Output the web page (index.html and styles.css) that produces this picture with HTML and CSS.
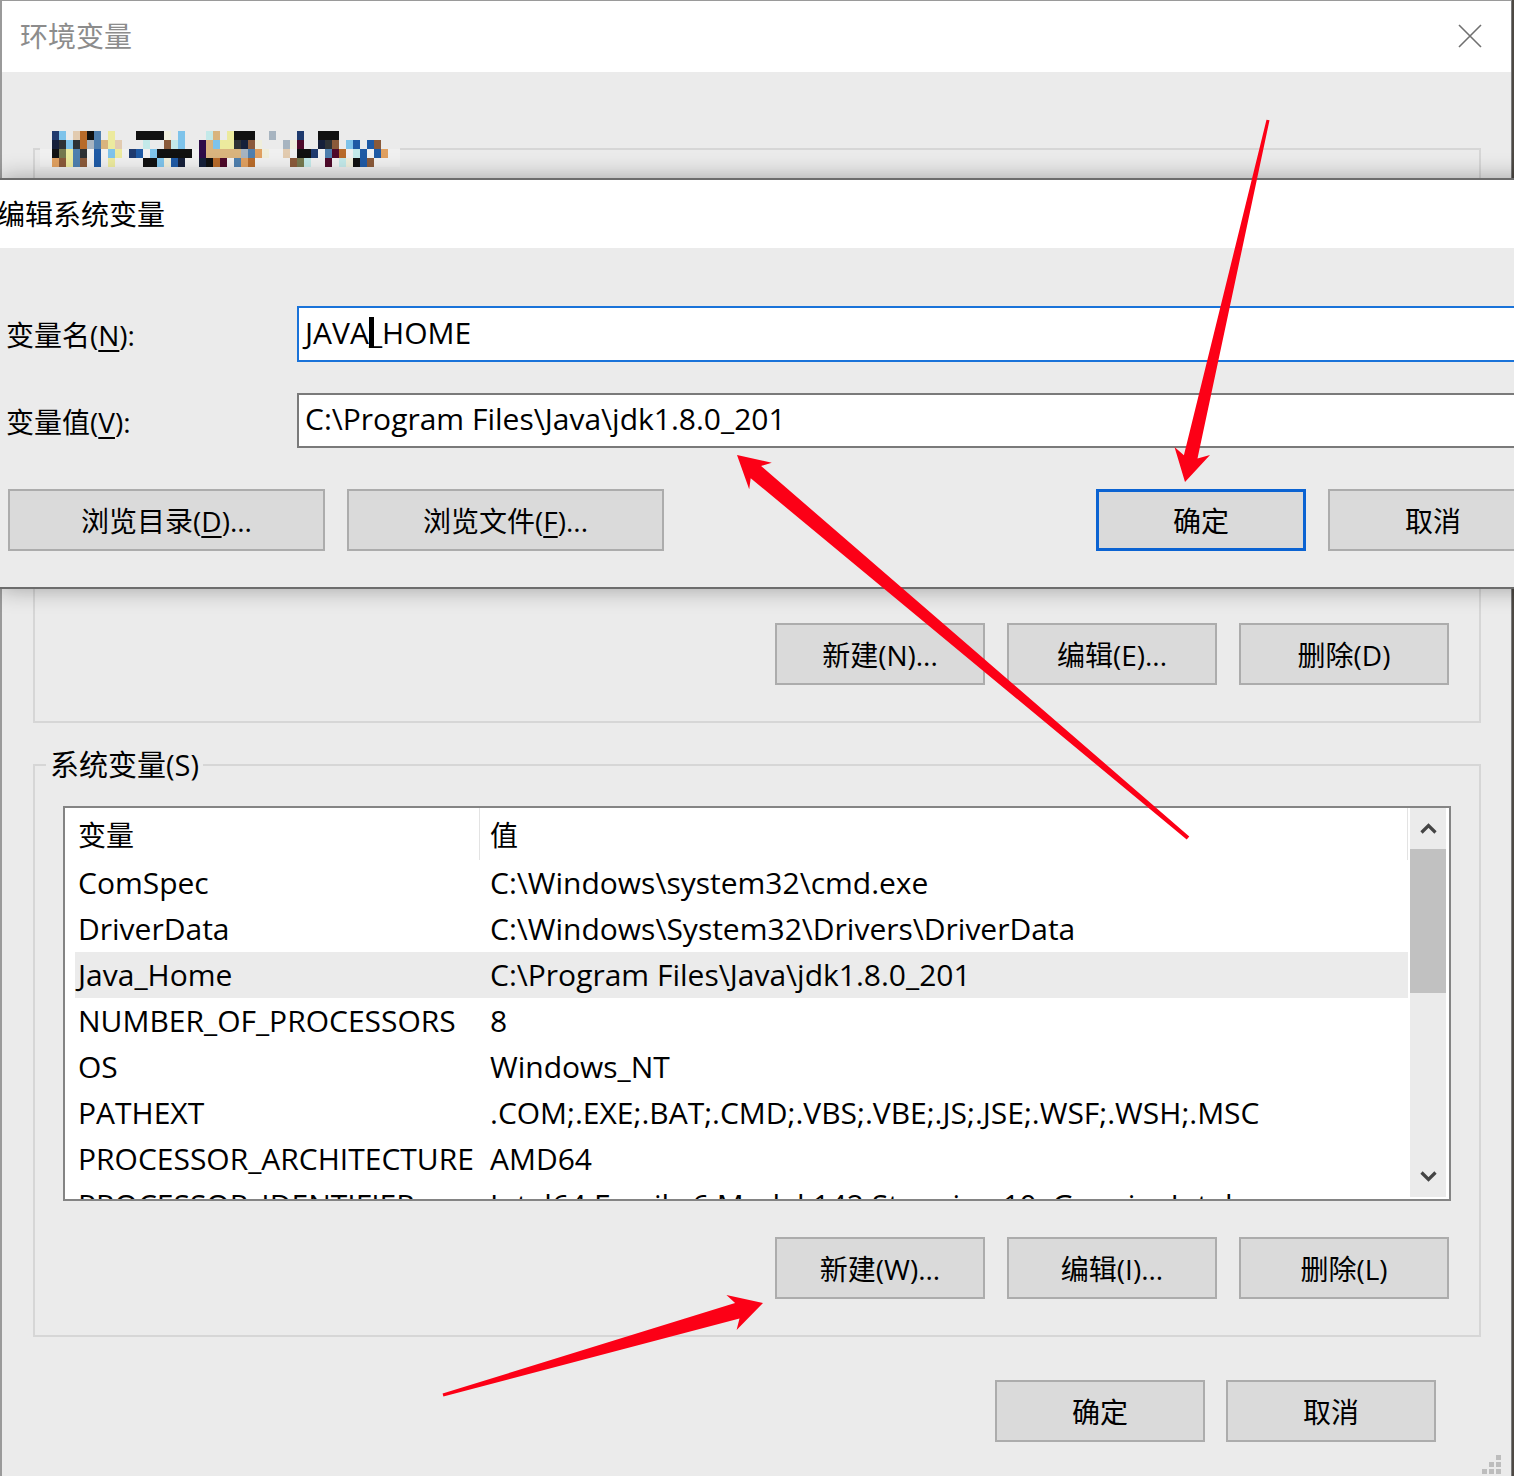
FILE: index.html
```html
<!DOCTYPE html>
<html lang="zh-CN">
<head>
  <meta charset="UTF-8">
  <meta name="viewport" content="width=device-width, initial-scale=1.0">
  <title>环境变量</title>
  <link rel="stylesheet" href="styles.css">
</head>
<body>
  <!-- Back window: 环境变量 -->
  <div class="env-window">
    <div class="title-bar">
      <span class="title">环境变量</span>
      <svg class="close-icon" width="24" height="24" viewBox="0 0 24 24">
        <path d="M1 1 L23 23 M23 1 L1 23" stroke="#707070" stroke-width="1.6" fill="none"/>
      </svg>
    </div>

    <div class="env-body">
      <fieldset class="group user-group">
        <legend class="legend-blur"><svg id="mosaic" width="360" height="36"></svg></legend>
        <div class="group-inner">
          <div class="var-list"></div>
          <div class="btn-row">
            <button class="btn">新建(N)...</button>
            <button class="btn">编辑(E)...</button>
            <button class="btn">删除(D)</button>
          </div>
        </div>
      </fieldset>

      <fieldset class="group">
        <legend>系统变量(S)</legend>
        <div class="group-inner">
          <div class="var-list">
            <div class="list-body">
              <div class="list-head">
                <span class="col-name">变量</span>
                <span class="col-value">值</span>
              </div>
              <div class="list-row"><span class="col-name">ComSpec</span><span class="col-value">C:\Windows\system32\cmd.exe</span></div>
              <div class="list-row"><span class="col-name">DriverData</span><span class="col-value">C:\Windows\System32\Drivers\DriverData</span></div>
              <div class="list-row selected"><span class="col-name">Java_Home</span><span class="col-value">C:\Program Files\Java\jdk1.8.0_201</span></div>
              <div class="list-row"><span class="col-name">NUMBER_OF_PROCESSORS</span><span class="col-value">8</span></div>
              <div class="list-row"><span class="col-name">OS</span><span class="col-value">Windows_NT</span></div>
              <div class="list-row"><span class="col-name">PATHEXT</span><span class="col-value">.COM;.EXE;.BAT;.CMD;.VBS;.VBE;.JS;.JSE;.WSF;.WSH;.MSC</span></div>
              <div class="list-row"><span class="col-name">PROCESSOR_ARCHITECTURE</span><span class="col-value">AMD64</span></div>
              <div class="list-row"><span class="col-name">PROCESSOR_IDENTIFIER</span><span class="col-value">Intel64 Family 6 Model 142 Stepping 10, GenuineIntel</span></div>
            </div>
            <div class="scrollbar">
              <div class="track">
                <div class="scroll-btn">
                  <svg width="17" height="11" viewBox="0 0 17 11"><polyline points="1.5,9.5 8.5,2.5 15.5,9.5" fill="none" stroke="#444" stroke-width="3.2"/></svg>
                </div>
                <div class="thumb"></div>
                <div class="track-fill"></div>
                <div class="scroll-btn">
                  <svg width="17" height="11" viewBox="0 0 17 11"><polyline points="1.5,1.5 8.5,8.5 15.5,1.5" fill="none" stroke="#444" stroke-width="3.2"/></svg>
                </div>
              </div>
            </div>
          </div>
          <div class="btn-row">
            <button class="btn">新建(W)...</button>
            <button class="btn">编辑(I)...</button>
            <button class="btn">删除(L)</button>
          </div>
        </div>
      </fieldset>

      <div class="dialog-actions">
        <button class="btn">确定</button>
        <button class="btn">取消</button>
      </div>
    </div>

    <svg class="grip" width="24" height="22" viewBox="0 0 24 22">
      <rect x="15" y="3" width="5" height="5" fill="#bdbdbd"/>
      <rect x="8" y="10" width="5" height="5" fill="#bdbdbd"/>
      <rect x="15" y="10" width="5" height="5" fill="#bdbdbd"/>
      <rect x="1" y="17" width="5" height="5" fill="#bdbdbd"/>
      <rect x="8" y="17" width="5" height="5" fill="#bdbdbd"/>
      <rect x="15" y="17" width="5" height="5" fill="#bdbdbd"/>
    </svg>
  </div>

  <!-- Front window: 编辑系统变量 -->
  <div class="edit-dialog">
    <div class="edit-title">编辑系统变量</div>
    <div class="edit-body">
      <div class="field-row">
        <label class="field-label">变量名(<u>N</u>):</label>
        <div class="text-input focused">JAVA<span class="caret"></span>_HOME</div>
      </div>
      <div class="field-row second">
        <label class="field-label">变量值(<u>V</u>):</label>
        <div class="text-input">C:\Program Files\Java\jdk1.8.0_201</div>
      </div>
      <div class="edit-actions">
        <button class="btn btn-wide">浏览目录(<u>D</u>)...</button>
        <button class="btn btn-wide">浏览文件(<u>F</u>)...</button>
        <button class="btn btn-primary">确定</button>
        <button class="btn">取消</button>
      </div>
    </div>
  </div>

  <!-- Red annotation arrows -->
  <svg class="arrows" width="1514" height="1476" viewBox="0 0 1514 1476">
    <polygon points="1269.5,120.3 1197.5,458.5 1210,455 1185,482 1174.5,447 1183.9,455.3 1266.5,119.7"/>
    <polygon points="1189.3,836.5 761.1,466 771.8,462.7 737,455 749.2,489.3 750.7,478.2 1186.7,839.5"/>
    <polygon points="442.6,1393.6 735.1,1303.1 726.4,1294.9 763,1303 736.6,1330.1 739.5,1318.5 443.4,1396.4"/>
  </svg>

  <script>
    // Blurred legend of the user-variable group (pixel mosaic)
    const palette = {
      a: '#1f3a6e', b: '#7ec3ea', c: '#e2cbb0', d: '#b86b2a', k: '#111111',
      s: '#4f7fae', y: '#ecea9e', w: '#efeedc', t: '#d9b47e', g: '#2e3235',
      h: '#a7b4c0', p: '#2e0c48', m: '#4e0a2a', B: '#1f5aa5', o: '#e0a060',
      r: '#8a5a3a', l: '#c3e9e9', v: '#75784e', n: '#16203a'
    };
    const rows = [
      'ab.cdks.y...kkkkw.b...lt.ykkk..h...a..kkk......',
      'ngbgdhstyc...l..rlb..ptbyygnrw...hwm..ngr.bB.Br',
      'kvysg.B.by.aB.bkkkkk.pttttthsow..c.kka.smd.lB.Bo',
      'orysr.B.y....kkbwBn..nkdm.sod.....rvl..m.lwkBr.'
    ];
    const mosaic = document.getElementById('mosaic');
    const ns = 'http://www.w3.org/2000/svg';

    const band = document.createElementNS(ns, 'rect');
    band.setAttribute('x', 0);
    band.setAttribute('y', 18);
    band.setAttribute('width', 360);
    band.setAttribute('height', 18);
    band.setAttribute('fill', '#f0f0f0');
    mosaic.appendChild(band);

    rows.forEach((row, r) => {
      [...row].forEach((ch, c) => {
        if (!palette[ch]) return;
        const cell = document.createElementNS(ns, 'rect');
        cell.setAttribute('x', 12 + c * 7);
        cell.setAttribute('y', r * 9);
        cell.setAttribute('width', 7);
        cell.setAttribute('height', 9);
        cell.setAttribute('fill', palette[ch]);
        mosaic.appendChild(cell);
      });
    });
  </script>
</body>
</html>
```

FILE: styles.css
```css
/* Two stacked Windows dialogs with annotation arrows */
* {
  box-sizing: border-box;
}

body {
  margin: 0;
  width: 1514px;
  height: 1476px;
  overflow: hidden;
  position: relative;
  background-color: #4d4944;
  font-family: "Open Sans", "Noto Sans CJK SC", sans-serif;
  font-size: 28px;
  color: #000;
}

u {
  text-decoration-thickness: 2px;
  text-underline-offset: 4px;
}

/* ---------- back window ---------- */
.env-window {
  width: 1512px;
  height: 1476px;
  position: relative;
  background-color: #ebebeb;
  border-top: 1px solid #9a9a9a;
  border-left: 2px solid #9a9a9a;
  border-right: 1px solid #7a7a7a;
}

.title-bar {
  height: 71px;
  background-color: #fff;
  display: flex;
  align-items: center;
  justify-content: space-between;
  padding: 0 29px 4px 18px;
}

.title {
  color: #8c8c8c;
}

.close-icon {
  display: block;
  margin-top: 2px;
}

.env-body {
  padding: 59px 30px 0 31px;
}

.group {
  margin: 0;
  padding: 0;
  min-width: 0;
  border: 2px solid #d6d6d6;
}

.group + .group {
  margin-top: 24px;
}

.group legend {
  margin-left: 11px;
  padding: 0 4px;
  height: 36px;
  line-height: 36px;
  font-size: 29px;
}

.group .legend-blur {
  margin-left: 5px;
  padding: 0;
}

.legend-blur svg {
  display: block;
}

.group-inner {
  padding: 23px 28px 36px;
}

.user-group .group-inner {
  padding-top: 25px;
}

.btn-row {
  display: flex;
  justify-content: flex-end;
  gap: 22px;
  margin-top: 36px;
  padding-right: 2px;
}

.btn {
  width: 210px;
  height: 62px;
  padding: 0;
  background-color: #dadada;
  border: 2px solid #acacac;
  font: inherit;
  color: #000;
}

.dialog-actions {
  display: flex;
  justify-content: flex-end;
  gap: 21px;
  margin-top: 43px;
  padding-right: 45px;
}

/* ---------- variable list ---------- */
.var-list {
  height: 395px;
  display: flex;
  background-color: #fff;
  border: 2px solid #848484;
}

.list-body {
  flex: 1;
  overflow: hidden;
  white-space: nowrap;
}

.list-head,
.list-row {
  display: flex;
  align-items: center;
}

.list-head {
  height: 52px;
  padding-top: 4px;
}

.list-row {
  height: 46px;
  font-size: 30px;
  padding-bottom: 2px;
}

.col-name {
  width: 415px;
  flex-shrink: 0;
  padding-left: 13px;
}

.col-value {
  flex: 1;
  padding-left: 10px;
}

.list-head .col-name,
.list-head .col-value {
  align-self: stretch;
  display: flex;
  align-items: center;
  margin-top: -4px;
  border-right: 1px solid #e3e3e3;
}

.list-row.selected {
  background: linear-gradient(90deg, transparent 10px, #ebebeb 10px);
}

.scrollbar {
  width: 41px;
  padding: 0 3px 2px 2px;
  background-color: #fff;
}

.track {
  height: 100%;
  display: flex;
  flex-direction: column;
  background-color: #ebebeb;
}

.scroll-btn {
  height: 41px;
  display: flex;
  align-items: center;
  justify-content: center;
}

.thumb {
  height: 144px;
  background-color: #c1c1c1;
}

.track-fill {
  flex: 1;
}

.grip {
  position: absolute;
  right: 6px;
  bottom: 2px;
}

/* ---------- front dialog ---------- */
.edit-dialog {
  position: absolute;
  top: 178px;
  left: 0;
  width: 1560px;
  background-color: #ebebeb;
  border-top: 2px solid #6c6c6c;
  border-bottom: 2px solid #6c6c6c;
  box-shadow: 0 0 22px rgba(0, 0, 0, 0.32);
}

.edit-title {
  height: 68px;
  display: flex;
  align-items: center;
  padding-bottom: 2px;
  background-color: #fff;
  margin-left: -3px;
}

.edit-body {
  padding: 58px 22px 36px 6px;
}

.field-row {
  display: flex;
  align-items: center;
  height: 56px;
}

.field-row.second {
  height: 55px;
  margin-top: 31px;
}

.field-label {
  width: 291px;
  flex-shrink: 0;
}

.text-input {
  flex: 1;
  height: 100%;
  display: flex;
  align-items: center;
  padding: 0 0 4px 6px;
  font-size: 30px;
  background-color: #fff;
  border: 2px solid #7a7a7a;
  white-space: nowrap;
}

.text-input.focused {
  border-color: #1a73d9;
}

.caret {
  display: inline-block;
  width: 5px;
  height: 31px;
  margin-right: -5px;
  background-color: #000;
  position: relative;
  z-index: 1;
}

.edit-actions {
  display: flex;
  gap: 22px;
  margin-top: 41px;
  padding-left: 2px;
}

.btn-wide {
  width: 317px;
}

.btn-primary {
  margin-left: auto;
  border: 3px solid #0b63d2;
}

/* ---------- annotation overlay ---------- */
.arrows {
  position: absolute;
  top: 0;
  left: 0;
  pointer-events: none;
}

.arrows polygon {
  fill: #fc0016;
}
```
